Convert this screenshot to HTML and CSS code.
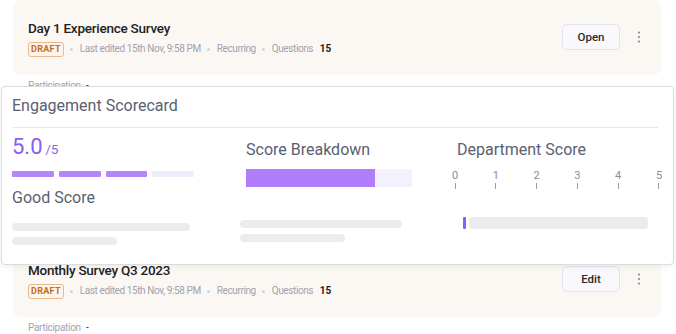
FILE: index.html
```html
<!DOCTYPE html>
<html lang="en">
<head>
    <meta charset="UTF-8">
    <meta name="viewport" content="width=device-width, initial-scale=1.0">
    <title>Surveys</title>
    <link rel="stylesheet" href="styles.css">
</head>
<body>
    <div class="survey-list">
        <div class="survey-item">
            <div class="survey-card">
                <div class="survey-info">
                    <div class="survey-title">Day 1 Experience Survey</div>
                    <div class="survey-meta">
                        <span class="badge">DRAFT</span>
                        <span class="sep"></span>
                        <span>Last edited 15th Nov, 9:58 PM</span>
                        <span class="sep"></span>
                        <span>Recurring</span>
                        <span class="sep"></span>
                        <span>Questions</span>
                        <span class="count">15</span>
                    </div>
                </div>
                <div class="survey-actions">
                    <button class="action-btn">Open</button>
                    <svg class="kebab" width="4" height="12" viewBox="0 0 4 12"><circle cx="2" cy="1.5" r="1.1"/><circle cx="2" cy="6" r="1.1"/><circle cx="2" cy="10.5" r="1.1"/></svg>
                </div>
            </div>
            <div class="participation">Participation <span class="dash">-</span></div>
        </div>

        <div class="survey-item">
            <div class="survey-card">
                <div class="survey-info">
                    <div class="survey-title">Onboarding Feedback</div>
                    <div class="survey-meta">
                        <span class="badge">DRAFT</span>
                        <span class="sep"></span>
                        <span>Last edited 15th Nov, 9:58 PM</span>
                        <span class="sep"></span>
                        <span>Recurring</span>
                        <span class="sep"></span>
                        <span>Questions</span>
                        <span class="count">15</span>
                    </div>
                </div>
                <div class="survey-actions">
                    <button class="action-btn">Edit</button>
                    <svg class="kebab" width="4" height="12" viewBox="0 0 4 12"><circle cx="2" cy="1.5" r="1.1"/><circle cx="2" cy="6" r="1.1"/><circle cx="2" cy="10.5" r="1.1"/></svg>
                </div>
            </div>
            <div class="participation">Participation <span class="dash">-</span></div>
        </div>

        <div class="survey-item">
            <div class="survey-card">
                <div class="survey-info">
                    <div class="survey-title">Monthly Survey Q3 2023</div>
                    <div class="survey-meta">
                        <span class="badge">DRAFT</span>
                        <span class="sep"></span>
                        <span>Last edited 15th Nov, 9:58 PM</span>
                        <span class="sep"></span>
                        <span>Recurring</span>
                        <span class="sep"></span>
                        <span>Questions</span>
                        <span class="count">15</span>
                    </div>
                </div>
                <div class="survey-actions">
                    <button class="action-btn">Edit</button>
                    <svg class="kebab" width="4" height="12" viewBox="0 0 4 12"><circle cx="2" cy="1.5" r="1.1"/><circle cx="2" cy="6" r="1.1"/><circle cx="2" cy="10.5" r="1.1"/></svg>
                </div>
            </div>
            <div class="participation">Participation <span class="dash">-</span></div>
        </div>
    </div>

    <!-- scorecard popover sits on top of the list -->
    <div class="scorecard">
        <div class="scorecard-header">
            <h2>Engagement Scorecard</h2>
        </div>
        <div class="scorecard-body">
            <div class="col col-score">
                <div class="score"><span class="score-value">5.0</span><span class="score-max">/5</span></div>
                <div class="segments">
                    <span class="seg on"></span>
                    <span class="seg on"></span>
                    <span class="seg on"></span>
                    <span class="seg"></span>
                </div>
                <div class="col-title">Good Score</div>
                <div class="skeleton">
                    <span class="line" style="width: 178px"></span>
                    <span class="line" style="width: 105px"></span>
                </div>
            </div>

            <div class="col col-breakdown">
                <div class="col-title indent">Score Breakdown</div>
                <div class="breakdown-bar indent">
                    <span class="breakdown-fill" style="width: 78%"></span>
                </div>
                <div class="skeleton">
                    <span class="line" style="width: 162px"></span>
                    <span class="line" style="width: 105px"></span>
                </div>
            </div>

            <div class="col col-dept">
                <div class="col-title indent">Department Score</div>
                <div class="axis">
                    <div class="tick"><span>0</span><i></i></div>
                    <div class="tick"><span>1</span><i></i></div>
                    <div class="tick"><span>2</span><i></i></div>
                    <div class="tick"><span>3</span><i></i></div>
                    <div class="tick"><span>4</span><i></i></div>
                    <div class="tick"><span>5</span><i></i></div>
                </div>
                <div class="dept-row">
                    <span class="dept-mark"></span>
                    <span class="dept-bar"></span>
                </div>
            </div>
        </div>
    </div>
</body>
</html>
```

FILE: styles.css
```css
html, body {
    overflow: hidden;
}

body {
    margin: 0;
    background: #ffffff;
    font-family: Roboto, "Noto Sans", sans-serif;
    color: #222;
}

.survey-list {
    padding: 0 15px 0 13px;
}

.survey-item {
    margin-bottom: 28px;
}

.survey-card {
    display: flex;
    align-items: center;
    justify-content: space-between;
    height: 75px;
    box-sizing: border-box;
    padding: 0 15px;
    background-color: #fbf8f4;
    border-radius: 8px;
}

.survey-title {
    font-size: 13.5px;
    font-weight: 500;
    letter-spacing: -0.25px;
    line-height: 20px;
    color: #222;
    margin-bottom: 3px;
}

.survey-meta {
    display: flex;
    align-items: center;
    gap: 6.5px;
    font-size: 10px;
    letter-spacing: -0.4px;
    line-height: 16px;
    color: #9fa1ae;
}

.badge {
    display: inline-block;
    padding: 0 2px;
    line-height: 13px;
    border: 1px solid #eab98a;
    border-radius: 3px;
    background-color: #fdf5ec;
    color: #c06d24;
    font-weight: 700;
    font-size: 9px;
    letter-spacing: 0.3px;
}

.sep {
    width: 3px;
    height: 3px;
    border-radius: 50%;
    background-color: #d6d6dc;
}

.count {
    color: #222;
    font-weight: 700;
    letter-spacing: 0;
}

.survey-actions {
    display: flex;
    align-items: center;
    gap: 17px;
    margin-top: -1px;
}

.action-btn {
    width: 58px;
    height: 26px;
    padding: 0;
    border: 1px solid #e3e3ee;
    border-radius: 5px;
    background-color: #f9f9fd;
    font-family: Roboto, sans-serif;
    font-size: 11.5px;
    font-weight: 500;
    color: #2a2a2a;
    cursor: pointer;
}

.kebab {
    fill: #8a8a94;
    margin-right: 5px;
}

.participation {
    margin-top: 4px;
    padding-left: 15px;
    font-size: 10px;
    letter-spacing: -0.3px;
    line-height: 14px;
    color: #a0a2b0;
}

.participation .dash {
    color: #333;
    margin-left: 3px;
}

/* Scorecard popover */

.scorecard {
    position: absolute;
    top: 86px;
    left: 1px;
    width: 673px;
    height: 179px;
    box-sizing: border-box;
    background: #ffffff;
    border: 1px solid #dcdcdf;
    border-radius: 4px;
    box-shadow: 0 2px 6px rgba(0, 0, 0, 0.06);
    padding: 0 15px 0 10px;
}

.scorecard-header {
    padding-top: 9px;
    padding-bottom: 11px;
    border-bottom: 1px solid #e8e8ea;
}

.scorecard-header h2 {
    margin: 0;
    font-size: 16px;
    line-height: 20px;
    font-weight: 400;
    color: #5a6073;
}

.scorecard-body {
    display: grid;
    grid-template-columns: 182px 172px 212px;
    column-gap: 46px;
    padding-top: 6px;
}

.col-dept {
    width: 212px;
    margin-left: -7px;
}

.col-title {
    font-size: 16px;
    line-height: 20px;
    color: #5a6073;
}

.indent {
    margin-left: 6px;
}

.score {
    line-height: 26px;
    color: #8b5cf6;
}

.score-value {
    font-size: 22px;
}

.score-max {
    font-size: 13px;
    margin-left: 3px;
}

.segments {
    display: flex;
    gap: 5px;
    margin-top: 8px;
    margin-bottom: 11px;
}

.seg {
    flex: 1;
    height: 6px;
    border-radius: 1px;
    background-color: #f0edfd;
}

.seg.on {
    background-color: #b386fa;
}

.skeleton {
    display: flex;
    flex-direction: column;
    gap: 6px;
}

.skeleton .line {
    height: 8px;
    border-radius: 4px;
    background-color: #ececec;
}

.col-score .skeleton {
    margin-top: 15px;
}

.col-breakdown .col-title,
.col-dept .col-title {
    margin-top: 6px;
}

.breakdown-bar {
    height: 18px;
    margin-top: 9px;
    background-color: #f4f1fe;
}

.breakdown-fill {
    display: block;
    height: 100%;
    background-color: #b07efb;
}

.col-breakdown .skeleton {
    margin-top: 33px;
}

.axis {
    display: flex;
    justify-content: space-between;
    margin-top: 9px;
}

.tick {
    width: 8px;
    display: flex;
    flex-direction: column;
    align-items: center;
}

.tick span {
    font-size: 11px;
    line-height: 13px;
    color: #8a8d98;
}

.tick i {
    width: 1px;
    height: 6px;
    margin-top: 1px;
    background-color: #9c9ca4;
}

.dept-row {
    display: flex;
    gap: 3px;
    margin-top: 28px;
    margin-left: 12px;
}

.dept-mark {
    width: 3px;
    height: 12px;
    border-radius: 1px;
    background-color: #8b5cf6;
}

.dept-bar {
    width: 179px;
    height: 12px;
    border-radius: 3px;
    background-color: #ececec;
}
```
